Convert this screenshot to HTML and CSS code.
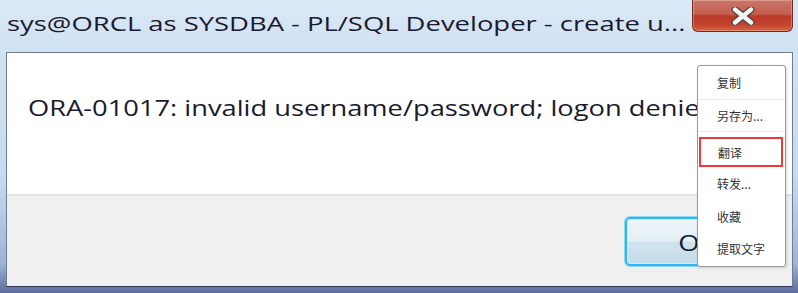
FILE: index.html
```html
<!DOCTYPE html>
<html>
<head>
<meta charset="utf-8">
<link rel="stylesheet" href="styles.css">
</head>
<body>
<div class="window">
  <div class="titlebar">
    <div class="title">sys@ORCL as SYSDBA - PL/SQL Developer - create u...</div>
    <div class="close">
      <svg width="26" height="18" viewBox="0 0 26 18">
        <path d="M5 2.5 L21 15.5 M21 2.5 L5 15.5" stroke="#4e4545" stroke-width="7" stroke-linecap="round" fill="none"/>
        <path d="M5 2.5 L21 15.5 M21 2.5 L5 15.5" stroke="#f2f2f2" stroke-width="4.4" stroke-linecap="round" fill="none"/>
      </svg>
    </div>
  </div>
  <div class="client">
    <div class="message"><span class="msgtext">ORA-01017: invalid username/password; logon denied</span></div>
    <div class="footer">
      <div class="ok"><span class="oktext">OK</span></div>
    </div>
  </div>
  <div class="menu">
    <div class="item sep">复制</div>
    <div class="item sep">另存为...</div>
    <div class="item hl">翻译</div>
    <div class="item">转发...</div>
    <div class="item">收藏</div>
    <div class="item">提取文字</div>
  </div>
</div>
</body>
</html>
```

FILE: styles.css
```css
html, body {
  margin: 0;
  padding: 0;
  width: 798px;
  height: 293px;
  overflow: hidden;
  background: #c3d7ee;
}

.window {
  position: relative;
  width: 798px;
  height: 293px;
  box-sizing: border-box;
  background: linear-gradient(to bottom, #dbe8f6 0%, #cfe1f3 20%, #c6dbf1 60%, #9fb4d6 90%, #5b6b9c 100%);
  display: flex;
  flex-direction: column;
}

.titlebar {
  height: 52px;
  display: flex;
  justify-content: space-between;
  align-items: flex-start;
  flex: none;
}

.title {
  font-family: "Open Sans", "Noto Sans", sans-serif;
  font-size: 20px;
  color: #1a1a2e;
  margin-left: 7px;
  padding-top: 10px;
  white-space: nowrap;
  transform: scaleX(1.37);
  transform-origin: left center;
}

.close {
  width: 101px;
  height: 32px;
  margin-right: 5px;
  box-sizing: border-box;
  border: 1px solid #6b2e26;
  border-top: none;
  border-radius: 0 0 6px 6px;
  background: linear-gradient(to bottom, #c9766a 0%, #c55f50 45%, #b93a28 52%, #c4432c 80%, #d9633f 100%);
  box-shadow: inset 0 0 0 1px rgba(255,220,210,0.35);
  display: flex;
  align-items: center;
  justify-content: center;
}

.client {
  flex: 1;
  margin: 0 5px 6px 6px;
  border: 1px solid #6f7d92;
  border-bottom-color: #2e3550;
  display: flex;
  flex-direction: column;
  background: #f0f0f0;
}

.message {
  height: 143px;
  background: #ffffff;
  border-bottom: 2px solid #e3e3e3;
  box-sizing: border-box;
  padding: 39px 0 0 21px;
  font-family: "Open Sans", "Noto Sans", sans-serif;
  font-size: 22px;
  color: #1a1a2e;
  white-space: nowrap;
  overflow: hidden;
}

.msgtext {
  display: inline-block;
  transform: scaleX(1.24);
  transform-origin: left center;
}

.footer {
  flex: 1;
  display: flex;
  justify-content: flex-end;
  align-items: flex-start;
  padding: 21px 22px 0 0;
}

.ok {
  width: 145px;
  height: 49px;
  box-sizing: border-box;
  border: 2px solid #33b7ee;
  border-radius: 5px;
  box-shadow: 0 0 0 1px #8fd8f5, inset 0 0 0 1px #c8ecfb;
  background: linear-gradient(to bottom, #eef5f9 0%, #e4eff6 48%, #cfe3ef 52%, #c6dcea 100%);
  font-family: "Open Sans", "Noto Sans", sans-serif;
  font-size: 22px;
  color: #1a1a2e;
  display: flex;
  align-items: center;
  justify-content: center;
}

.oktext {
  display: inline-block;
  transform: scaleX(1.24);
}

.menu {
  position: absolute;
  left: 697px;
  top: 65px;
  width: 89px;
  height: 202px;
  box-sizing: border-box;
  background: #ffffff;
  border: 1px solid #9a9a9a;
  border-radius: 3px;
  box-shadow: 1px 1px 3px rgba(0,0,0,0.15);
  display: flex;
  flex-direction: column;
  padding: 1px 0;
}

.item {
  height: 33px;
  box-sizing: border-box;
  padding-left: 19px;
  display: flex;
  align-items: center;
  font-family: "Noto Sans CJK SC", "Noto Sans", sans-serif;
  font-size: 12px;
  color: #333333;
}

.item.sep {
  border-bottom: 1px solid #ececec;
}

.item.hl {
  margin: 5px 2px 0 1px;
  height: 30px;
  padding-left: 17px;
  border: 2px solid #f03a3a;
}
```
